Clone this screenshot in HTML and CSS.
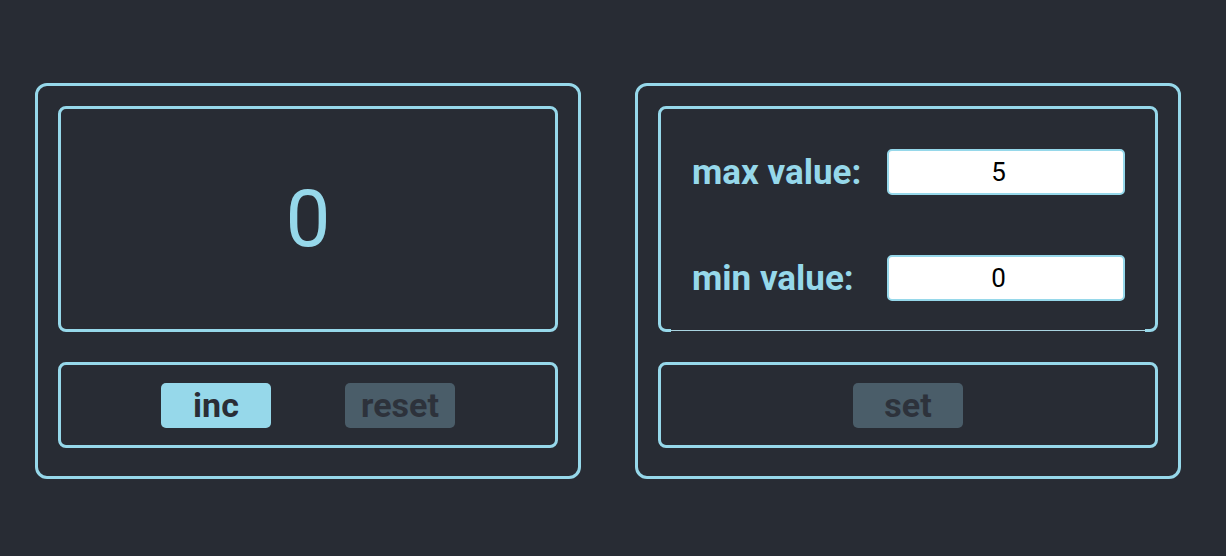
FILE: index.html
```html
<!DOCTYPE html>
<html lang="en">
<head>
<meta charset="utf-8">
<title>Counter</title>
<link rel="stylesheet" href="styles.css">
</head>
<body>
<div class="app">
  <div class="card">
    <div class="display">
      <span class="count">0</span>
    </div>
    <div class="panel">
      <button class="btn active">inc</button>
      <button class="btn disabled">reset</button>
    </div>
  </div>
  <div class="card">
    <div class="display settings">
      <div class="row">
        <span class="label">max value:</span>
        <input class="field" type="number" value="5">
      </div>
      <div class="row">
        <span class="label">min value:</span>
        <input class="field" type="number" value="0">
      </div>
    </div>
    <div class="panel">
      <button class="btn disabled">set</button>
    </div>
  </div>
</div>
</body>
</html>
```

FILE: styles.css
```css
html, body {
  margin: 0;
  padding: 0;
  background: #282c34;
  font-family: Roboto, "Liberation Sans", sans-serif;
}

.app {
  display: flex;
  gap: 54px;
  padding: 83px 0 0 35px;
}

.card {
  box-sizing: border-box;
  width: 546px;
  height: 396px;
  border: 3px solid #96d8ea;
  border-radius: 12px;
  padding: 20px 20px 28px;
  display: flex;
  flex-direction: column;
}

.display {
  box-sizing: border-box;
  height: 226px;
  border: 3px solid #96d8ea;
  border-radius: 8px;
  display: flex;
  align-items: center;
  justify-content: center;
  position: relative;
}

.count {
  color: #96d8ea;
  font-size: 80px;
  line-height: 1;
}

.settings {
  flex-direction: column;
  align-items: stretch;
  justify-content: flex-start;
  padding: 40px 30px 0 31px;
  gap: 60px;
}

.settings::after {
  content: "";
  position: absolute;
  left: 10px;
  right: 10px;
  bottom: -3px;
  height: 3px;
  background: linear-gradient(#282c34 0 1px, #a9d4e0 1px 2px, #282c34 2px 3px);
}

.row {
  display: flex;
  align-items: center;
  justify-content: space-between;
}

.label {
  color: #96d8ea;
  font-weight: 700;
  font-size: 35px;
}

.field {
  box-sizing: border-box;
  width: 238px;
  height: 46px;
  border: 2px solid #96d8ea;
  border-radius: 5px;
  background: #fff;
  color: #000;
  text-align: center;
  font-family: Roboto, "Liberation Sans", sans-serif;
  font-size: 26px;
  padding: 0 2px;
  outline: none;
}

.panel {
  box-sizing: border-box;
  margin-top: 30px;
  height: 86px;
  border: 3px solid #96d8ea;
  border-radius: 8px;
  display: flex;
  align-items: center;
  justify-content: center;
  gap: 74px;
}

.btn {
  width: 110px;
  height: 45px;
  border: none;
  border-radius: 5px;
  padding: 0;
  font-family: Roboto, "Liberation Sans", sans-serif;
  font-weight: 700;
  font-size: 34px;
  line-height: 45px;
  color: #2a2d36;
}

.btn.active {
  background: #96d8ea;
}

.btn.disabled {
  background: #4a5d69;
  color: #2d323b;
}
```
